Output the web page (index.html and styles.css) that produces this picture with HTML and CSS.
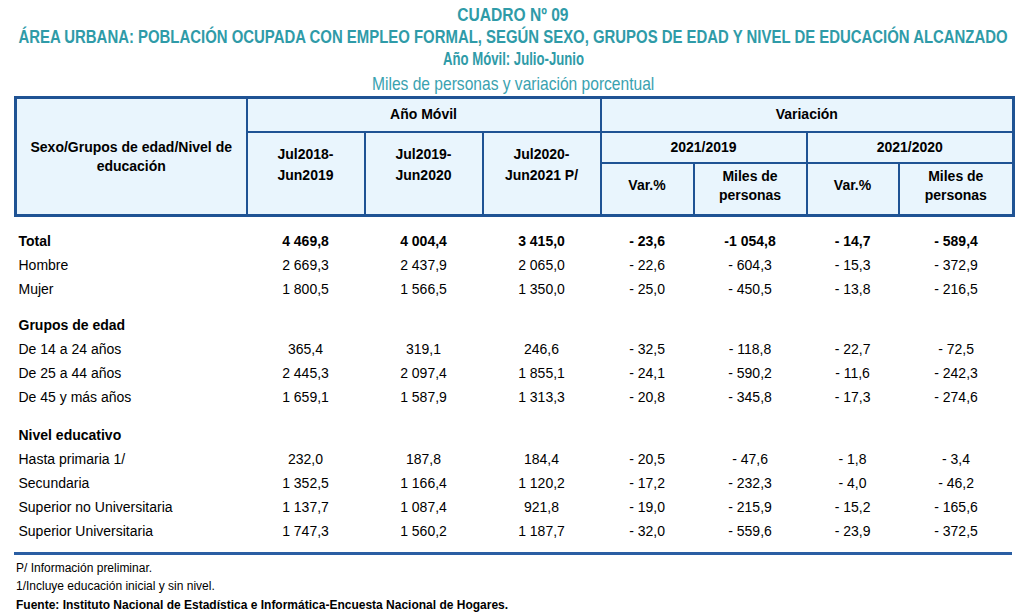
FILE: index.html
```html
<!DOCTYPE html>
<html lang="es">
<head>
<meta charset="utf-8">
<title>Cuadro Nº 09</title>
<link rel="stylesheet" href="styles.css">
</head>
<body>
<div class="page">
  <header class="titles">
    <div class="t1">CUADRO Nº 09</div>
    <div class="t2">ÁREA URBANA: POBLACIÓN OCUPADA CON EMPLEO FORMAL, SEGÚN SEXO, GRUPOS DE EDAD Y NIVEL DE EDUCACIÓN ALCANZADO</div>
    <div class="t3">Año Móvil: Julio-Junio</div>
    <div class="t4">Miles de personas y variación porcentual</div>
  </header>
  <table class="data">
    <colgroup>
      <col class="c-label">
      <col class="c-year"><col class="c-year"><col class="c-year">
      <col class="c-var"><col class="c-miles"><col class="c-var2"><col class="c-miles2">
    </colgroup>
    <thead>
      <tr class="hr1">
        <th rowspan="3" class="first">Sexo/Grupos de edad/Nivel de<br>educación</th>
        <th colspan="3">Año Móvil</th>
        <th colspan="4" class="last">Variación</th>
      </tr>
      <tr class="hr2">
        <th rowspan="2" class="bot period">Jul2018-<br>Jun2019</th>
        <th rowspan="2" class="bot period">Jul2019-<br>Jun2020</th>
        <th rowspan="2" class="bot period">Jul2020-<br>Jun2021 P/</th>
        <th colspan="2">2021/2019</th>
        <th colspan="2" class="last">2021/2020</th>
      </tr>
      <tr class="hr3">
        <th class="bot">Var.%</th>
        <th class="bot">Miles de<br>personas</th>
        <th class="bot">Var.%</th>
        <th class="bot last">Miles de<br>personas</th>
      </tr>
    </thead>
    <tbody>
      <tr class="gap first-gap"><td colspan="8"></td></tr>
      <tr class="strong"><td class="lbl">Total</td><td>4 469,8</td><td>4 004,4</td><td>3 415,0</td><td>- 23,6</td><td>-1 054,8</td><td>- 14,7</td><td>- 589,4</td></tr>
      <tr><td class="lbl">Hombre</td><td>2 669,3</td><td>2 437,9</td><td>2 065,0</td><td>- 22,6</td><td>- 604,3</td><td>- 15,3</td><td>- 372,9</td></tr>
      <tr><td class="lbl">Mujer</td><td>1 800,5</td><td>1 566,5</td><td>1 350,0</td><td>- 25,0</td><td>- 450,5</td><td>- 13,8</td><td>- 216,5</td></tr>
      <tr class="gap"><td colspan="8"></td></tr>
      <tr class="strong"><td class="lbl">Grupos de edad</td><td colspan="7"></td></tr>
      <tr><td class="lbl">De 14 a 24 años</td><td>365,4</td><td>319,1</td><td>246,6</td><td>- 32,5</td><td>- 118,8</td><td>- 22,7</td><td>- 72,5</td></tr>
      <tr><td class="lbl">De 25 a 44 años</td><td>2 445,3</td><td>2 097,4</td><td>1 855,1</td><td>- 24,1</td><td>- 590,2</td><td>- 11,6</td><td>- 242,3</td></tr>
      <tr><td class="lbl">De 45 y más años</td><td>1 659,1</td><td>1 587,9</td><td>1 313,3</td><td>- 20,8</td><td>- 345,8</td><td>- 17,3</td><td>- 274,6</td></tr>
      <tr class="gap gap2"><td colspan="8"></td></tr>
      <tr class="strong"><td class="lbl">Nivel educativo</td><td colspan="7"></td></tr>
      <tr><td class="lbl">Hasta primaria 1/</td><td>232,0</td><td>187,8</td><td>184,4</td><td>- 20,5</td><td>- 47,6</td><td>- 1,8</td><td>- 3,4</td></tr>
      <tr><td class="lbl">Secundaria</td><td>1 352,5</td><td>1 166,4</td><td>1 120,2</td><td>- 17,2</td><td>- 232,3</td><td>- 4,0</td><td>- 46,2</td></tr>
      <tr><td class="lbl">Superior no Universitaria</td><td>1 137,7</td><td>1 087,4</td><td>921,8</td><td>- 19,0</td><td>- 215,9</td><td>- 15,2</td><td>- 165,6</td></tr>
      <tr><td class="lbl">Superior Universitaria</td><td>1 747,3</td><td>1 560,2</td><td>1 187,7</td><td>- 32,0</td><td>- 559,6</td><td>- 23,9</td><td>- 372,5</td></tr>
    </tbody>
  </table>
  <div class="rule"></div>
  <footer class="notes">
    <div>P/ Información preliminar.</div>
    <div>1/Incluye educación inicial y sin nivel.</div>
    <div class="src">Fuente: Instituto Nacional de Estadística e Informática-Encuesta Nacional de Hogares.</div>
  </footer>
</div>
</body>
</html>
```
FILE: styles.css
```css
* { box-sizing: border-box; }
html, body { margin: 0; padding: 0; background: #ffffff; overflow: hidden; }
body { font-family: "Liberation Sans", Arial, sans-serif; color: #000; }

.page {
  width: 1023px;
  padding: 4px 11px 0 14px;
}

/* Titles: Arial Narrow look, emulated with a horizontal squeeze */
.titles {
  display: flex;
  flex-direction: column;
  align-items: center;
  color: #2f9ba8;
}
.titles > div {
  white-space: nowrap;
  flex: none;
}
.t1, .t2, .t3 { font-weight: bold; }
.t1 { font-size: 19px; line-height: 22px; transform: scaleX(0.82); }
.t2 { font-size: 19px; line-height: 22px; transform: scaleX(0.785); }
.t3 { font-size: 18px; line-height: 22px; transform: scaleX(0.73); }
.t4 { font-size: 19px; line-height: 22px; font-weight: normal; color: #3aa2b0; margin-top: 3px; transform: scaleX(0.82); }

.data {
  width: 998px;
  border-collapse: collapse;
  table-layout: fixed;
  margin-top: 1px;
  font-size: 14px;
}
.c-label { width: 231px; }
.c-year { width: 118px; }
.c-var { width: 93px; }
.c-miles { width: 113px; }
.c-var2 { width: 92px; }
.c-miles2 { width: 115px; }

.data th {
  background: #e9f5fd;
  border: 2px solid #1f5394;
  font-weight: bold;
  text-align: center;
  vertical-align: middle;
  line-height: 19px;
  padding: 0;
}
.hr1 th { border-top: 3px solid #1f5394; height: 34px; }
.hr2 th { height: 31px; }
.hr3 th { height: 53px; padding-bottom: 6px; }
.data th.period { line-height: 21px; padding-bottom: 16px; }
.data th.first { border-left: 3px solid #1f5394; }
.data th.last { border-right: 3px solid #1f5394; }
.data th.bot, .data th.first { border-bottom: 3px solid #1f5394; }

.data td {
  padding: 0;
  height: 24px;
  text-align: center;
  vertical-align: middle;
  white-space: nowrap;
}
.data td.lbl { text-align: left; padding-left: 3px; }
.data tr.strong td { font-weight: bold; }
.data tr.gap td { height: 12px; }
.data tr.first-gap td { height: 13px; }
.data tr.gap2 td { height: 14px; }

.rule {
  width: 998px;
  height: 3px;
  background: #2a5ea3;
  margin-top: 9px;
}

.notes {
  padding-left: 2px;
  padding-top: 4px;
  font-size: 12px;
  line-height: 18.5px;
}
.notes .src { font-weight: bold; }
```
